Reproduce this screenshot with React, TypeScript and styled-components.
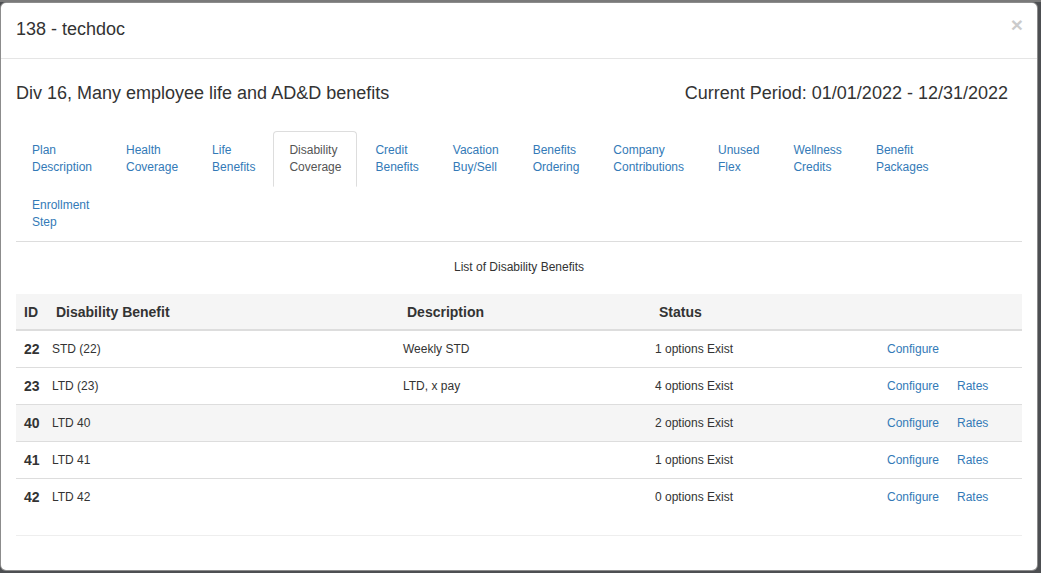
import React from "react";
import styled, { createGlobalStyle } from "styled-components";

const Global = createGlobalStyle`
  html, body { margin: 0; padding: 0; }
  body {
    background: #4d4f52;
    font-family: "Liberation Sans", Arial, sans-serif;
    color: #333;
    font-size: 12px;
  }
  * { box-sizing: border-box; }
`;

const Backdrop = styled.div`
  width: 1041px;
  height: 573px;
  padding-top: 2px;
  overflow: hidden;
  background: linear-gradient(#7a7a7a 0 2px, #4d4f52 2px);
`;

const Modal = styled.div`
  width: 1038px;
  height: 569px;
  background: #fff;
  border: 1px solid rgba(0, 0, 0, 0.45);
  border-radius: 6px;
  display: flex;
  flex-direction: column;
`;

const Header = styled.div`
  display: flex;
  align-items: center;
  justify-content: space-between;
  padding: 15px;
  border-bottom: 1px solid #e5e5e5;
`;

const Title = styled.h4`
  margin: 0;
  font-size: 18px;
  font-weight: normal;
  line-height: 25px;
  color: #333;
  position: relative;
  top: -1px;
`;

const Close = styled.button`
  border: 0;
  background: transparent;
  padding: 0;
  font-family: "Liberation Sans", Arial, sans-serif;
  font-size: 21px;
  font-weight: bold;
  line-height: 1;
  color: #000;
  opacity: 0.2;
  position: relative;
  top: -6px;
  left: 1px;
  cursor: pointer;
`;

const Body = styled.div`
  padding: 15px;
`;

const PlanRow = styled.div`
  display: flex;
  justify-content: space-between;
  font-size: 18px;
  line-height: 22px;
  margin: 8px 14px 27px 0;
  color: #333;
`;

const TabList = styled.ul`
  list-style: none;
  margin: 0;
  padding: 0;
  display: flex;
  flex-wrap: wrap;
  border-bottom: 1px solid #ddd;
`;

const TabItem = styled.li`
  margin-bottom: -1px;
`;

const TabLink = styled.a<{ $active?: boolean }>`
  display: block;
  margin-right: 2px;
  padding: 10px 15px;
  line-height: 17px;
  font-size: 12px;
  border: 1px solid ${(p) => (p.$active ? "#ddd" : "transparent")};
  border-bottom-color: ${(p) => (p.$active ? "#fff" : "transparent")};
  border-radius: 4px 4px 0 0;
  background: ${(p) => (p.$active ? "#fff" : "transparent")};
  color: ${(p) => (p.$active ? "#555" : "#337ab7")};
  text-decoration: none;
  cursor: pointer;
`;

const Caption = styled.div`
  text-align: center;
  font-size: 12px;
  line-height: 17px;
  margin: 17px 0 18px;
  color: #333;
`;

const TableWrap = styled.div`
  padding-bottom: 20px;
  border-bottom: 1px solid #eee;
`;

const Table = styled.table`
  width: 100%;
  border-collapse: collapse;
  table-layout: fixed;
`;

const Th = styled.th<{ $pad?: number }>`
  background: #f5f5f5;
  text-align: left;
  font-size: 14px;
  font-weight: bold;
  line-height: 20px;
  padding: 8px 8px 7px ${(p) => p.$pad ?? 12}px;
  border-bottom: 2px solid #ddd;
  color: #333;
`;

const Tr = styled.tr<{ $hl?: boolean }>`
  background: ${(p) => (p.$hl ? "#f5f5f5" : "#fff")};
`;

const Td = styled.td<{ $bold?: boolean; $first?: boolean }>`
  padding: 8px;
  line-height: 20px;
  font-size: ${(p) => (p.$bold ? "14px" : "12px")};
  font-weight: ${(p) => (p.$bold ? "bold" : "normal")};
  color: #333;
  border-top: ${(p) => (p.$first ? "0" : "1px solid #ddd")};
  vertical-align: middle;
  white-space: nowrap;
`;

const Link = styled.a`
  color: #337ab7;
  text-decoration: none;
  cursor: pointer;
`;

const tabs: [string, string][] = [
  ["Plan", "Description"],
  ["Health", "Coverage"],
  ["Life", "Benefits"],
  ["Disability", "Coverage"],
  ["Credit", "Benefits"],
  ["Vacation", "Buy/Sell"],
  ["Benefits", "Ordering"],
  ["Company", "Contributions"],
  ["Unused", "Flex"],
  ["Wellness", "Credits"],
  ["Benefit", "Packages"],
  ["Enrollment", "Step"],
];

const rows = [
  { id: 22, name: "STD (22)", desc: "Weekly STD", status: "1 options Exist", rates: false },
  { id: 23, name: "LTD (23)", desc: "LTD, x pay", status: "4 options Exist", rates: true },
  { id: 40, name: "LTD 40", desc: "", status: "2 options Exist", rates: true, hl: true },
  { id: 41, name: "LTD 41", desc: "", status: "1 options Exist", rates: true },
  { id: 42, name: "LTD 42", desc: "", status: "0 options Exist", rates: true },
];

export default function App() {
  return (
    <>
      <Global />
      <Backdrop>
        <Modal>
          <Header>
            <Title>138 - techdoc</Title>
            <Close aria-label="Close">×</Close>
          </Header>
          <Body>
            <PlanRow>
              <span>Div 16, Many employee life and AD&amp;D benefits</span>
              <span>Current Period: 01/01/2022 - 12/31/2022</span>
            </PlanRow>
            <TabList>
              {tabs.map(([a, b]) => (
                <TabItem key={a + b}>
                  <TabLink $active={a === "Disability"}>
                    {a}
                    <br />
                    {b}
                  </TabLink>
                </TabItem>
              ))}
            </TabList>
            <Caption>List of Disability Benefits</Caption>
            <TableWrap>
              <Table>
                <colgroup>
                  <col style={{ width: 28 }} />
                  <col style={{ width: 351 }} />
                  <col style={{ width: 252 }} />
                  <col style={{ width: 232 }} />
                  <col style={{ width: 70 }} />
                  <col />
                </colgroup>
                <thead>
                  <tr>
                    <Th $pad={8}>ID</Th>
                    <Th>Disability Benefit</Th>
                    <Th>Description</Th>
                    <Th>Status</Th>
                    <Th />
                    <Th />
                  </tr>
                </thead>
                <tbody>
                  {rows.map((r, i) => (
                    <Tr key={r.id} $hl={r.hl}>
                      <Td $bold $first={i === 0}>{r.id}</Td>
                      <Td $first={i === 0}>{r.name}</Td>
                      <Td $first={i === 0}>{r.desc}</Td>
                      <Td $first={i === 0}>{r.status}</Td>
                      <Td $first={i === 0}>
                        <Link>Configure</Link>
                      </Td>
                      <Td $first={i === 0}>{r.rates ? <Link>Rates</Link> : null}</Td>
                    </Tr>
                  ))}
                </tbody>
              </Table>
            </TableWrap>
          </Body>
        </Modal>
      </Backdrop>
    </>
  );
}
